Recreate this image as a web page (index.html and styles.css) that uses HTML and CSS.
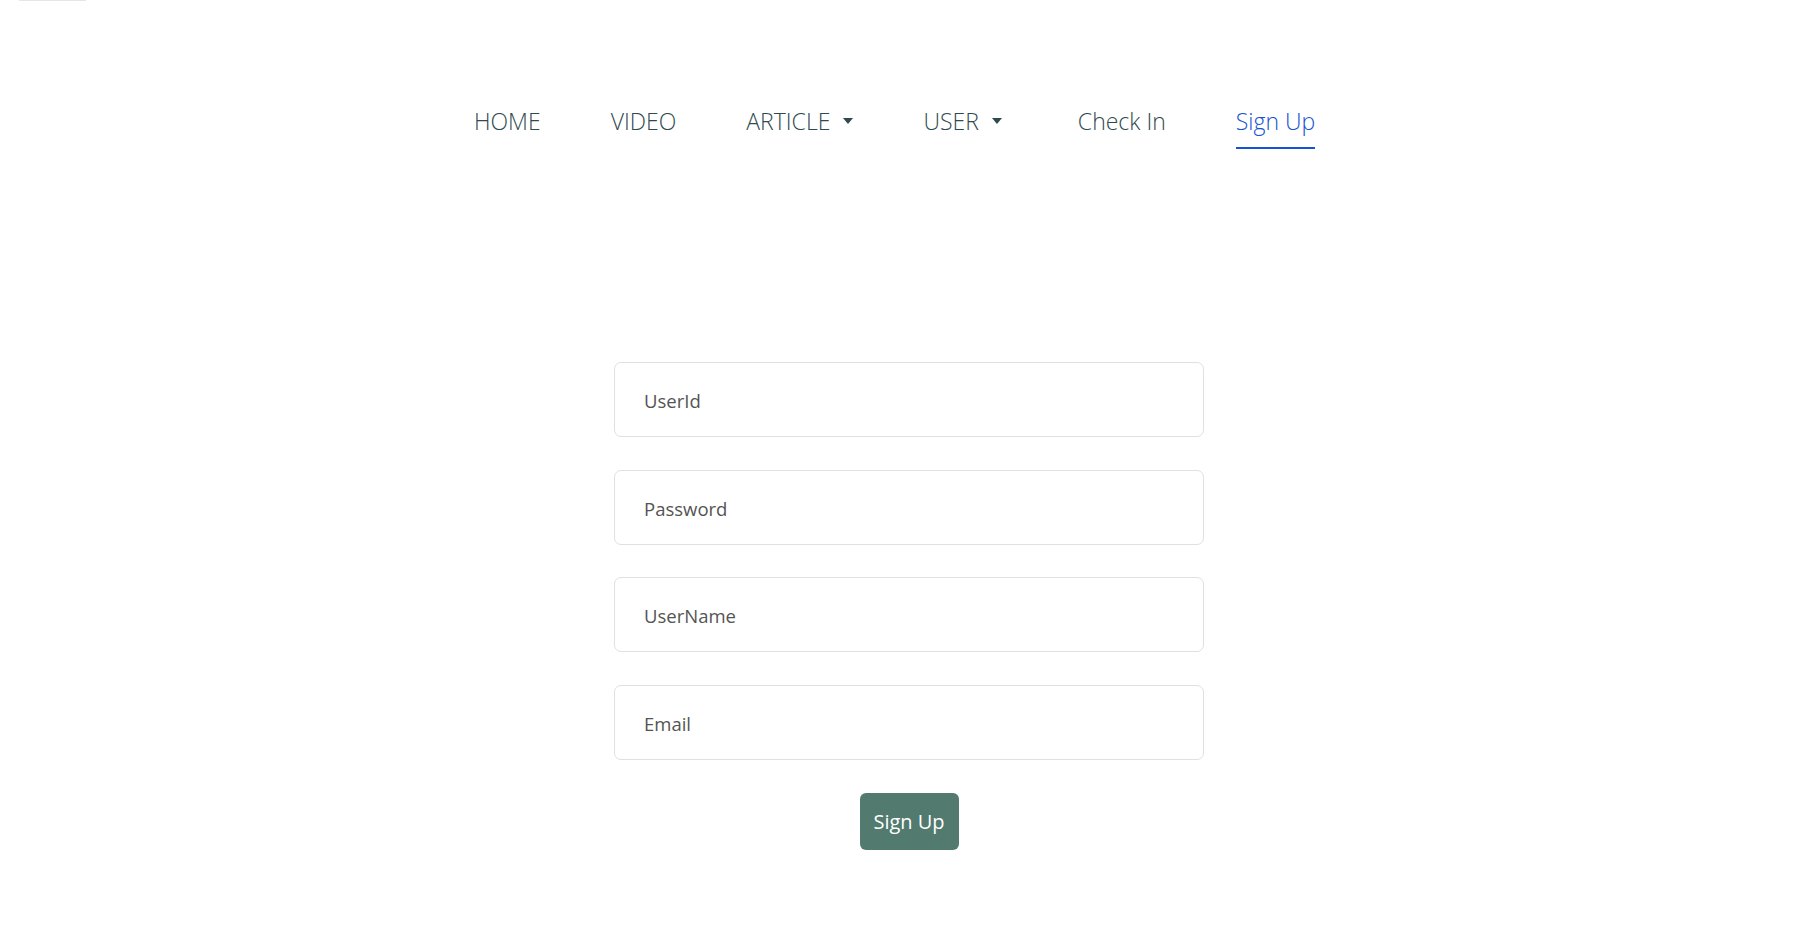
FILE: index.html
```html
<!DOCTYPE html>
<html lang="en">
<head>
<meta charset="utf-8">
<title>Sign Up</title>
<link rel="stylesheet" href="styles.css">
</head>
<body>
<div class="top-line"></div>
<nav class="nav">
  <ul class="nav-list">
    <li class="nav-item"><a class="nav-link" href="#">HOME</a></li>
    <li class="nav-item"><a class="nav-link" href="#">VIDEO</a></li>
    <li class="nav-item"><a class="nav-link dropdown" href="#">ARTICLE<span class="caret"></span></a></li>
    <li class="nav-item nav-item-user"><a class="nav-link dropdown" href="#">USER<span class="caret"></span></a></li>
    <li class="nav-item"><a class="nav-link" href="#">Check In</a></li>
    <li class="nav-item"><a class="nav-link active" href="#">Sign Up</a></li>
  </ul>
</nav>
<main class="main">
  <form class="signup">
    <input class="field" type="text" placeholder="UserId">
    <input class="field" type="password" placeholder="Password">
    <input class="field" type="text" placeholder="UserName">
    <input class="field" type="email" placeholder="Email">
    <button class="btn" type="button">Sign Up</button>
  </form>
</main>
</body>
</html>
```
FILE: styles.css
```css
* { box-sizing: border-box; }
html, body { margin: 0; padding: 0; background: #fff; }
body { font-family: "Open Sans", "Noto Sans", sans-serif; color: #2f4a4a; }

.top-line { width: 67px; height: 1px; margin-left: 19px; background: #e6e6e6; }

.nav { padding-top: 102px; }
.nav-list {
  list-style: none;
  margin: 0 0 0 474px;
  padding: 0;
  display: flex;
  gap: 70px;
}
.nav-item-user { margin-right: 6px; }
.nav-link {
  display: flex;
  align-items: center;
  font-size: 23px;
  font-weight: 300;
  line-height: 36px;
  color: #2f4a4d;
  text-decoration: none;
  padding-bottom: 8px;
  border-bottom: 2px solid transparent;
}
.nav-link.active { color: #1553d2; border-bottom-color: #1553d2; }
.caret {
  width: 0; height: 0;
  margin-left: 13px;
  border-left: 5.5px solid transparent;
  border-right: 5.5px solid transparent;
  border-top: 6px solid #2f4a4d;
}

.main { padding-top: 213px; }
.signup {
  width: 590px;
  margin: 0 auto;
  display: flex;
  flex-direction: column;
  align-items: center;
  gap: 32.5px;
}
.field {
  width: 100%;
  height: 75px;
  border: 1px solid #dfe0e4;
  border-radius: 7px;
  padding: 2px 29px 0;
  font-family: "Open Sans", "Noto Sans", sans-serif;
  font-size: 18.5px;
  color: #333;
  outline: none;
}
.field::placeholder { color: #545454; }
.btn {
  margin-top: 1px;
  width: 99px;
  height: 57px;
  border: none;
  border-radius: 6px;
  background: #527a6f;
  color: #fff;
  font-family: "Open Sans", "Noto Sans", sans-serif;
  font-size: 20px;
  padding: 0;
}
```
